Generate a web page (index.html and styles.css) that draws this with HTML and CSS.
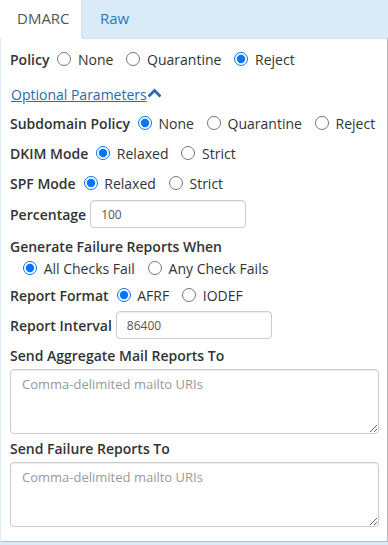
FILE: index.html
```html
<!DOCTYPE html>
<html>
  <head>
    <meta charset="utf-8">
    <title>DMARC record</title>
    <link rel="stylesheet" href="styles.css">
  </head>
  <body>
    <div class="tabs">
      <div class="tab active">DMARC</div>
      <div class="tab">Raw</div>
    </div>

    <div class="panel">
      <div class="row row-policy">
        <b class="label">Policy</b>
        <label class="opt"><input type="radio" name="p"> None</label>
        <label class="opt"><input type="radio" name="p"> Quarantine</label>
        <label class="opt"><input type="radio" name="p" checked> Reject</label>
      </div>

      <div class="row row-link">
        <a href="#" class="toggle">Optional Parameters</a>
        <svg class="chev" width="13" height="10" viewBox="0 0 13 10"><path d="M1.5 7.5 L6.5 2.5 L11.5 7.5" fill="none" stroke="#2a6aae" stroke-width="2.8" stroke-linecap="square"/></svg>
      </div>

      <div class="row">
        <b class="label">Subdomain Policy</b>
        <label class="opt"><input type="radio" name="sp" checked> None</label>
        <label class="opt"><input type="radio" name="sp"> Quarantine</label>
        <label class="opt"><input type="radio" name="sp"> Reject</label>
      </div>

      <div class="row">
        <b class="label">DKIM Mode</b>
        <label class="opt"><input type="radio" name="adkim" checked> Relaxed</label>
        <label class="opt"><input type="radio" name="adkim"> Strict</label>
      </div>

      <div class="row">
        <b class="label">SPF Mode</b>
        <label class="opt"><input type="radio" name="aspf" checked> Relaxed</label>
        <label class="opt"><input type="radio" name="aspf"> Strict</label>
      </div>

      <div class="row row-input">
        <b class="label">Percentage</b>
        <input class="field" type="text" value="100">
      </div>

      <div class="row row-head">
        <b class="label">Generate Failure Reports When</b>
      </div>
      <div class="row row-sub">
        <label class="opt"><input type="radio" name="fo" checked> All Checks Fail</label>
        <label class="opt"><input type="radio" name="fo"> Any Check Fails</label>
      </div>

      <div class="row">
        <b class="label">Report Format</b>
        <label class="opt"><input type="radio" name="rf" checked> AFRF</label>
        <label class="opt"><input type="radio" name="rf"> IODEF</label>
      </div>

      <div class="row row-input row-interval">
        <b class="label">Report Interval</b>
        <input class="field" type="text" value="86400">
      </div>

      <div class="block">
        <b class="label">Send Aggregate Mail Reports To</b>
        <textarea class="area" placeholder="Comma-delimited mailto URIs"></textarea>
      </div>

      <div class="block">
        <b class="label">Send Failure Reports To</b>
        <textarea class="area" placeholder="Comma-delimited mailto URIs"></textarea>
      </div>
    </div>
  </body>
</html>
```

FILE: styles.css
```css
* {
    box-sizing: border-box;
}
body {
    margin: 0;
    background: #d9ebf8;
    font-family: "Open Sans", sans-serif;
    font-size: 14px;
    color: #333;
}
.tabs {
    display: flex;
    height: 38px;
}
.tab {
    padding: 8px 18px 0 18px;
    font-size: 15px;
    color: #2a7ab9;
}
.tab.active {
    width: 82px;
    padding-left: 17px;
    background: #fff;
    color: #555;
    border-right: 1px solid #ddd;
}
.panel {
    width: 387px;
    margin-left: 1px;
    height: 504px;
    background: #fff;
    border-right: 1px solid #bbb;
    border-bottom: 1px solid #bbb;
    padding: 6px 8px 0 9px;
    position: relative;
}
.panel::before {
    content: "";
    position: absolute;
    top: 0;
    left: 81px;
    right: 0;
    border-top: 1px solid #ddd;
}
.row {
    display: flex;
    align-items: center;
    height: 30px;
    white-space: nowrap;
}
.label {
    font-weight: 600;
    margin-right: 6px;
    white-space: nowrap;
}
.opt {
    display: flex;
    align-items: center;
    margin-right: 11px;
    white-space: pre;
}
.opt input {
    margin: 0 3px 0 2px;
    width: 14px;
    height: 14px;
}
.row-link {
    height: 34px;
    padding-top: 6px;
    padding-left: 1px;
}
.toggle {
    color: #2a6aae;
}
.chev {
    margin-left: 1px;
    margin-top: -2px;
}
.row-input {
    height: 32px;
}
.row-input .label {
    margin-right: 4px;
}
.row-interval {
    margin-top: -1px;
}
.field {
    width: 156px;
    height: 28px;
    border: 1px solid #ccc;
    border-radius: 4px;
    box-shadow: inset 0 1px 1px rgba(0, 0, 0, .075);
    font-family: "Open Sans", sans-serif;
    font-size: 12px;
    color: #555;
    padding: 0 10px;
}
.row-head {
    height: 26px;
    align-items: flex-end;
}
.row-sub {
    height: 24px;
    padding-left: 11px;
}
.block {
    margin-top: 5px;
}
.block .label {
    display: block;
    line-height: 20px;
}
.area {
    display: block;
    width: 369px;
    height: 65px;
    margin-top: 3px;
    margin-bottom: 5px;
    border: 1px solid #ccc;
    border-radius: 4px;
    box-shadow: inset 0 1px 1px rgba(0, 0, 0, .075);
    font-family: "Open Sans", sans-serif;
    font-size: 13px;
    padding: 5px 11px;
    resize: both;
}
.area::placeholder {
    color: #999;
}
```
